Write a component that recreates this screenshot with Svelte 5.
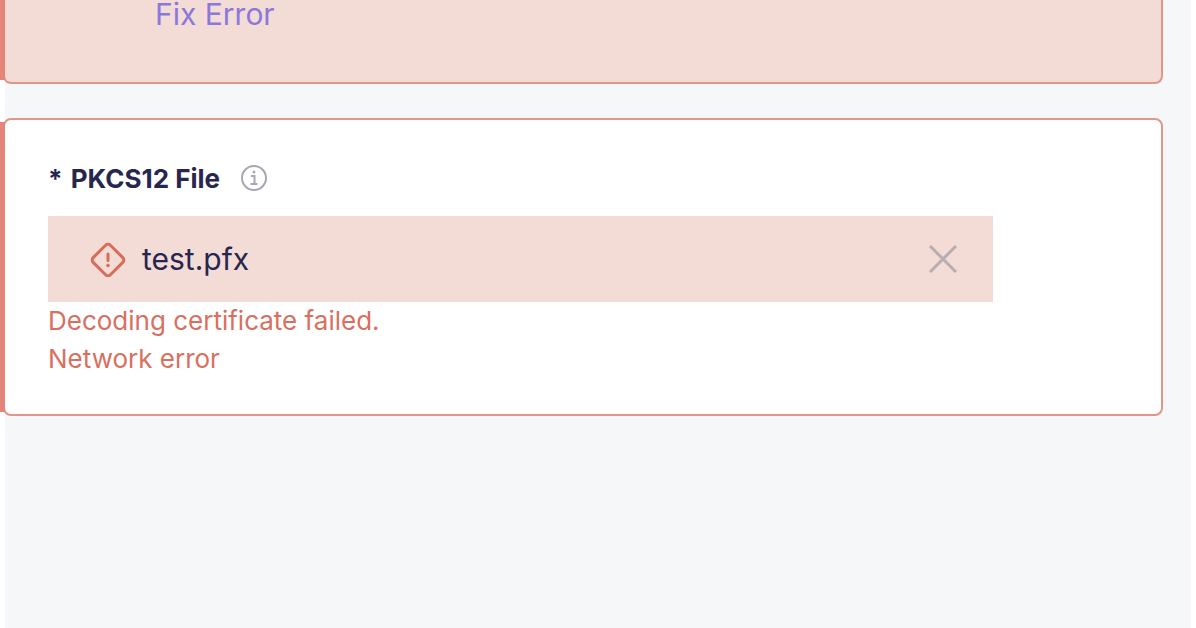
<script>
  let fileName = $state('test.pfx');
  const errors = ['Decoding certificate failed.', 'Network error'];
</script>

<main class="page">
  <div class="stack">
    <section class="card alert">
      <a class="fix" href="#pkcs12">Fix Error</a>
    </section>

    <section class="card" id="pkcs12">
      <div class="label">
        <h2><span class="star">*</span> PKCS12 File</h2>
        <button class="icon" type="button" aria-label="About this file">
          <svg width="28" height="28" viewBox="0 0 28 28" fill="none" stroke="#a6a6b4" stroke-width="2">
            <circle cx="14" cy="13" r="12" />
            <path d="M11 11h3.500v7.500M10.500 19h7" />
            <circle cx="14" cy="7" r="1.500" fill="#a6a6b4" stroke="none" />
          </svg>
        </button>
      </div>

      {#if fileName}
        <div class="file">
          <svg width="36" height="36" viewBox="0 0 36 36" fill="none" stroke="#d96c59" stroke-width="3" stroke-linecap="round">
            <path d="M15.600 4.200 3.200 16.600a3.400 3.400 0 0 0 0 4.800l12.400 12.400a3.400 3.400 0 0 0 4.800 0l12.400-12.400a3.400 3.400 0 0 0 0-4.800L20.400 4.200a3.400 3.400 0 0 0-4.800 0Z" />
            <path d="M18 13v6.500" />
            <circle cx="18" cy="24.500" r="1.800" fill="#d96c59" stroke="none" />
          </svg>
          <span class="name">{fileName}</span>
          <button class="icon" type="button" aria-label="Remove file" onclick={() => (fileName = '')}>
            <svg width="28" height="28" viewBox="0 0 28 28" fill="none" stroke="#b9adb0" stroke-width="3">
              <path d="m1 1 26 26M27 1 1 27" />
            </svg>
          </button>
        </div>
        <div class="errors" role="alert">
          {#each errors as error}
            <p>{error}</p>
          {/each}
        </div>
      {/if}
    </section>
  </div>
</main>

<style>
  :global(body) {
    background: #fff;
  }
  .page {
    box-sizing: border-box;
    min-height: 100vh;
    padding: 0 5px;
    background: #f6f7f9 content-box;
    font-family: Inter, sans-serif;
    color: #27264f;
    display: grid;
  }
  .stack {
    display: flex;
    flex-direction: column;
    gap: 34px;
    margin: 0 28px 0 -2px;
  }
  .card {
    position: relative;
    box-sizing: border-box;
    padding: 40px 43px 36px;
    border: 2px solid #e29589;
    border-radius: 8px;
    background: #fff;
  }
  .card::before {
    content: '';
    position: absolute;
    inset: 2px auto 2px -5px;
    width: 5px;
    background: #e58478;
  }
  .alert {
    padding: 0 150px 54px;
    border-top: 0;
    border-radius: 0 0 8px 8px;
    background: #f3dbd6;
  }
  .alert::before {
    top: 0;
  }
  .fix {
    display: block;
    font-size: 30px;
    line-height: 28px;
    color: #8b78dc;
    text-decoration: none;
  }
  .label {
    display: flex;
    align-items: center;
    gap: 20px;
    height: 38px;
    margin-bottom: 18px;
  }
  h2 {
    margin: 0;
    font-size: 26px;
    line-height: 38px;
    font-weight: 700;
  }
  .star {
    margin-right: 2px;
  }
  .icon {
    display: flex;
    padding: 0;
    border: 0;
    background: none;
    cursor: pointer;
  }
  .file {
    box-sizing: border-box;
    display: flex;
    align-items: center;
    gap: 16px;
    min-height: 86px;
    margin-right: 125px;
    padding: 0 36px 0 42px;
    background: #f3dbd6;
  }
  .name {
    flex: 1;
    font-size: 30px;
    line-height: 36px;
  }
  .errors p {
    margin: 0;
    font-size: 26px;
    line-height: 38px;
    color: #d9705f;
  }
</style>
